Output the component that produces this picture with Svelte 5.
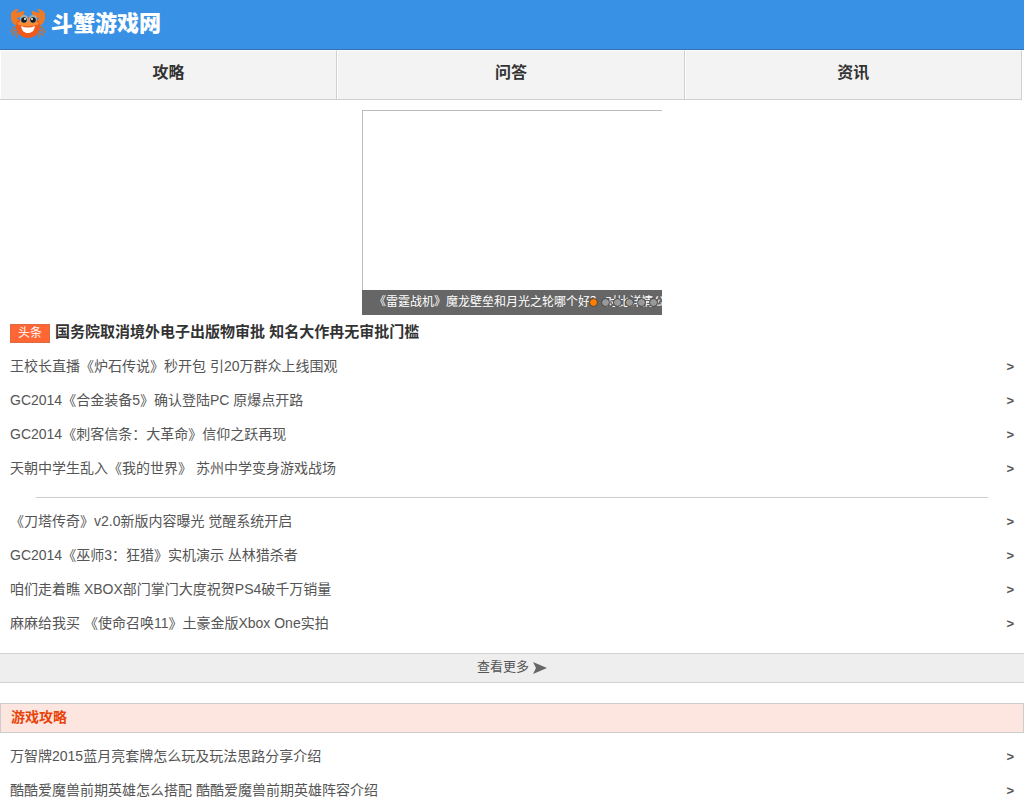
<script>
  const tabs = ["攻略", "问答", "资讯"];

  const slides = [
    "《雷霆战机》魔龙壁垒和月光之轮哪个好？ 对比详情公",
    "",
    "",
    "",
    "",
    "",
  ];
  let current = $state(0);

  const newsGroups = [
    [
      "王校长直播《炉石传说》秒开包 引20万群众上线围观",
      "GC2014《合金装备5》确认登陆PC 原爆点开路",
      "GC2014《刺客信条：大革命》信仰之跃再现",
      "天朝中学生乱入《我的世界》 苏州中学变身游戏战场",
    ],
    [
      "《刀塔传奇》v2.0新版内容曝光 觉醒系统开启",
      "GC2014《巫师3：狂猎》实机演示 丛林猎杀者",
      "咱们走着瞧 XBOX部门掌门大度祝贺PS4破千万销量",
      "麻麻给我买 《使命召唤11》土豪金版Xbox One实拍",
    ],
  ];

  const guides = [
    "万智牌2015蓝月亮套牌怎么玩及玩法思路分享介绍",
    "酷酷爱魔兽前期英雄怎么搭配 酷酷爱魔兽前期英雄阵容介绍",
  ];
</script>

{#snippet list(items)}
  <ul class="list">
    {#each items as item}
      <li><a href="#top"><span>{item}</span><b>&gt;</b></a></li>
    {/each}
  </ul>
{/snippet}

<header id="top">
  <a class="logo" href="#top">
    <svg width="36" height="32" viewBox="0 0 36 32" aria-hidden="true">
      <g fill="none" stroke="#b5764f" stroke-width="1.6" stroke-linecap="round">
        <path d="M7 18 3 20 1 24M7 21 4 23 3 27M9 24 6 26 7 29" />
        <path d="M29 18 33 20 35 24M29 21 32 23 33 27M27 24 30 26 29 29" />
      </g>
      <g fill="#ef7a25">
        <path d="M10 18C4 18 1 14 1 9 0 4 4 1 9 1L6 5 14 3C15 7 12 9 7 10 7 12 9 13 13 13Z" />
        <path d="M26 18C32 18 35 14 35 9 36 4 32 1 27 1L30 5 22 3C21 7 24 9 29 10 29 12 27 13 23 13Z" />
      </g>
      <path d="M6 18C6 12 11 9 18 9S30 12 30 18C30 25 25 30 18 30S6 25 6 18Z" fill="#ee5a1c" />
      <path d="M7 16C10 10 26 10 29 16 24 19 12 19 7 16Z" fill="#f98a31" />
      <circle cx="14" cy="11" r="4" fill="#a3adb0" />
      <circle cx="23" cy="11" r="4" fill="#a3adb0" />
      <circle cx="14" cy="12" r="2.8" fill="#171c22" />
      <circle cx="23" cy="12" r="2.8" fill="#171c22" />
      <circle cx="15" cy="11" r="1" fill="#fff" />
      <circle cx="22" cy="11" r="1" fill="#fff" />
      <path d="M11 18Q18 21 25 18C24 23 22 25 18 25S12 23 11 18Z" fill="#fff" />
    </svg>
    <span>斗蟹游戏网</span>
  </a>
</header>

<nav>
  {#each tabs as tab}
    <a href="#top">{tab}</a>
  {/each}
</nav>

<main>
  <section class="slider">
    <p>{slides[current]}</p>
    <div class="dots">
      {#each slides as _, i}
        <button
          class:active={i === current}
          aria-label={`${i + 1}`}
          onclick={() => (current = i)}
        ></button>
      {/each}
    </div>
  </section>

  <h1><em>头条</em><a href="#top">国务院取消境外电子出版物审批 知名大作冉无审批门槛</a></h1>

  {@render list(newsGroups[0])}
  <hr />
  {@render list(newsGroups[1])}

  <a class="more" href="#top">
    <span>查看更多</span>
    <svg width="14" height="12" viewBox="0 0 14 12" aria-hidden="true">
      <path d="M0 0 14 6 0 12 3 6Z" fill="#666" />
    </svg>
  </a>

  <h2>游戏攻略</h2>
  {@render list(guides)}
</main>

<style>
  :global(body) {
    background: #fff;
    color: #555;
    font: 14px/34px "Liberation Sans", "Noto Sans CJK SC", sans-serif;
  }

  a {
    color: inherit;
    text-decoration: none;
  }

  header {
    height: 49px;
    background: #3891e5;
    border-bottom: 1px solid #3474b4;
  }

  .logo {
    display: inline-flex;
    align-items: center;
    gap: 5px;
    height: 48px;
    padding-left: 10px;
    color: #fff;
    font-size: 22px;
    font-weight: 900;
  }

  nav {
    display: grid;
    grid-template-columns: 33fr 34fr 33fr;
    margin-right: 2px;
    background: #f3f3f3;
    border-bottom: 1px solid #d0d0d0;
  }

  nav a {
    height: 49px;
    border-top: 1px solid #fff;
    border-left: 1px solid #fff;
    border-right: 1px solid #d0d0d0;
    box-sizing: border-box;
    color: #333;
    font-size: 16px;
    font-weight: bold;
    line-height: 44px;
    text-align: center;
  }

  .slider {
    position: relative;
    display: flex;
    flex-direction: column;
    justify-content: flex-end;
    width: 300px;
    height: 205px;
    margin: 10px auto 0;
    box-sizing: border-box;
    border-top: 1px solid #bbb;
    border-left: 1px solid #bbb;
  }

  .slider p {
    margin: 0 0 0 -1px;
    padding-left: 12px;
    overflow: hidden;
    background: #666;
    color: #fff;
    font-size: 12px;
    line-height: 24px;
    height: 25px;
    white-space: nowrap;
  }

  .dots {
    position: absolute;
    right: 4px;
    bottom: 8px;
    display: flex;
    gap: 3px;
  }

  .dots button {
    width: 9px;
    height: 9px;
    padding: 0;
    border: 1px solid #444;
    border-radius: 50%;
    background: #999;
  }

  .dots button.active {
    background: #ff7e00;
  }

  h1 {
    display: flex;
    align-items: center;
    gap: 5px;
    margin: 0;
    padding: 0 10px;
    color: #333;
    font-size: 15px;
    line-height: 34px;
  }

  h1 em {
    width: 38px;
    height: 17px;
    margin-top: 2px;
    border: 1px solid #dd6b43;
    background: #ff6633;
    color: #fff;
    font-size: 12px;
    font-style: normal;
    font-weight: normal;
    line-height: 16px;
    text-align: center;
  }

  .list {
    margin: 0;
    padding: 0 10px;
    list-style: none;
  }

  .list a {
    display: flex;
    justify-content: space-between;
    height: 34px;
  }

  .list b {
    font-size: 13px;
    line-height: 36px;
  }

  hr {
    height: 1px;
    margin: 12px 36px 6px;
    border: 0;
    background: #ccc;
  }

  .more {
    display: flex;
    align-items: center;
    justify-content: center;
    gap: 4px;
    height: 28px;
    margin: 13px 0 20px;
    border-top: 1px solid #d0d0d0;
    border-bottom: 1px solid #d0d0d0;
    background: #eee;
    font-size: 13px;
    line-height: 26px;
  }

  .more span {
    height: 28px;
  }

  h2 {
    height: 28px;
    margin: 0 0 6px;
    padding-left: 10px;
    border: 1px solid #ccc;
    background: #fce6df;
    color: #e8440a;
    font-size: 14px;
    line-height: 26px;
  }
</style>
